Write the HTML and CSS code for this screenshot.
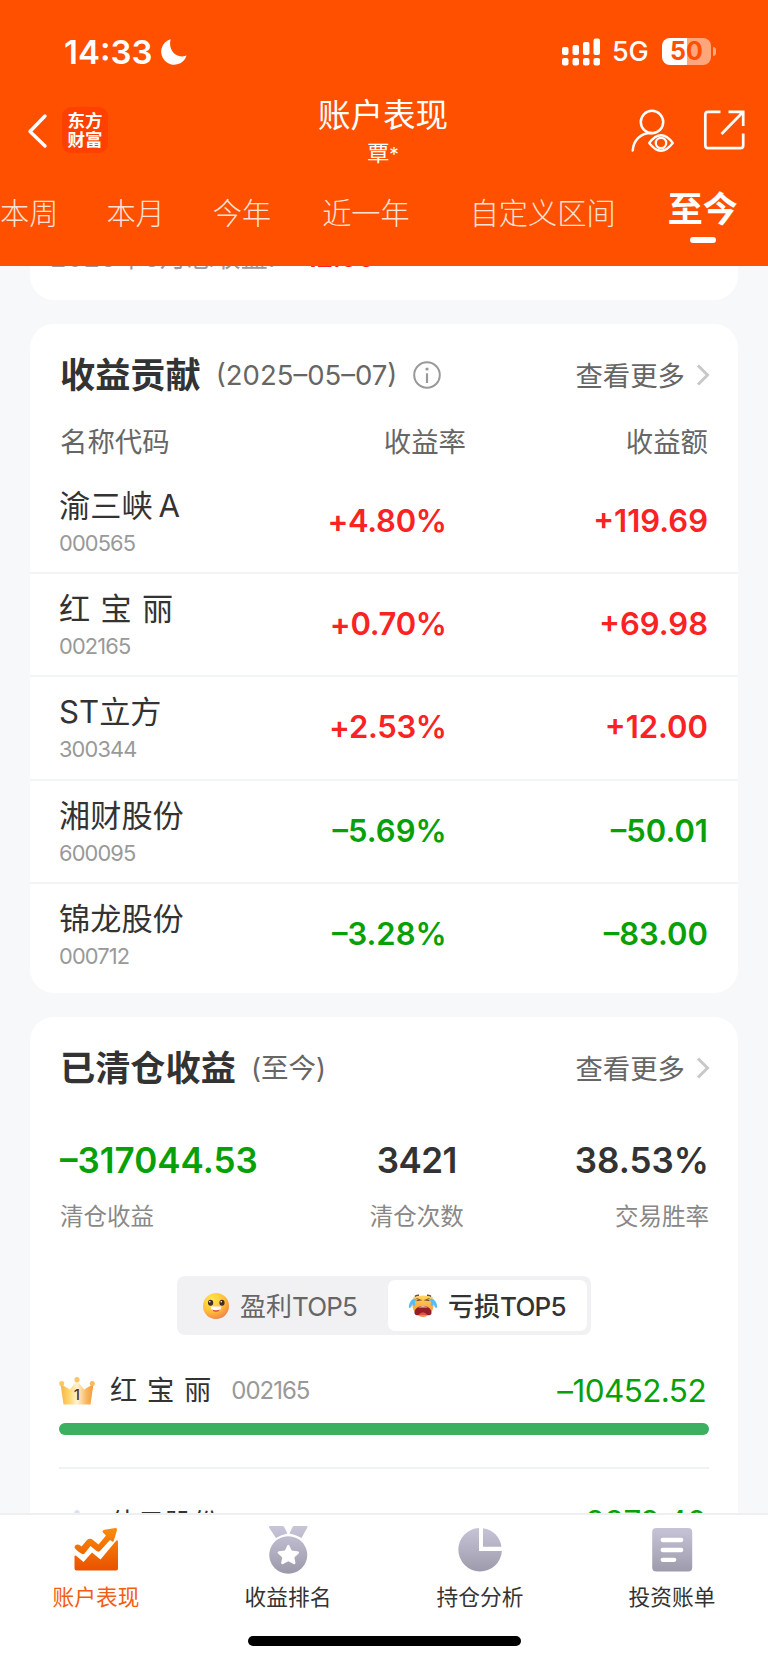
FILE: index.html
```html
<!DOCTYPE html>
<html lang="zh-CN">
<head>
<meta charset="utf-8">
<title>账户表现</title>
<link rel="stylesheet" href="styles.css">
</head>
<body>
<div class="app">
  <header class="header">
    <div class="status">
      <span class="time">14:33</span>
      <svg class="moon" width="28" height="28" viewBox="0 0 28 28"><path d="M10.6 1.2A13 13 0 1 0 26.6 17.6C17.500 21 7.600 13 10.600 1.200Z" fill="#fff"/></svg>
      <svg class="signal" width="39" height="28" viewBox="0 0 39 28" fill="#fff"><rect y="9" width="6.500" height="8" rx="2"/><rect x="10.500" y="7" width="6.500" height="10" rx="2"/><rect x="21" y="4" width="6.500" height="13" rx="2"/><rect x="31.500" y="0.500" width="6.500" height="16.500" rx="2"/><rect y="20" width="6.500" height="7.500" rx="2"/><rect x="10.500" y="20" width="6.500" height="7.500" rx="2"/><rect x="21" y="20" width="6.500" height="7.500" rx="2"/><rect x="31.500" y="20" width="6.500" height="7.500" rx="2"/></svg>
      <span class="net">5G</span>
      <span class="battery"><b>5</b><b>0</b></span><i class="nub"></i>
    </div>
    <div class="nav">
      <svg class="back" width="22" height="36" viewBox="0 0 22 36"><path d="M18 3 3 18.500l15 14.500" fill="none" stroke="#fff" stroke-width="3.400" stroke-linecap="round" stroke-linejoin="round"/></svg>
      <div class="logo">东方<br>财富</div>
      <div class="heading"><h1>账户表现</h1><p>覃<span>*</span></p></div>
      <svg class="person" width="44" height="44" viewBox="0 0 44 44" fill="none" stroke="#fff" stroke-width="2.500" stroke-linecap="round"><circle cx="21" cy="13" r="11.200"/><path d="M1.700 41.500C2.500 31 10 23.500 21 24"/><path d="M18.200 34Q30 18.500 41.800 34 30 49.500 18.200 34Z" fill="#ff5000" stroke-width="2.300" stroke-linejoin="round"/><circle cx="30" cy="34" r="5.200" stroke-width="2.300"/></svg>
      <svg class="share" width="42" height="42" viewBox="0 0 42 42" fill="none" stroke="#fff" stroke-width="2.700"><path d="M17.500 2.800H5Q2.300 2.800 2.300 5.500V36.500Q2.300 39.200 5 39.200H37.500Q40.200 39.200 40.200 36.500V24.500M25.500 2.800H40.200V17M39.500 3.500 18.500 25"/></svg>
    </div>
    <nav class="periods">
      <span>本周</span><span>本月</span><span>今年</span><span>近一年</span><span>自定义区间</span><strong>至今</strong>
    </nav>
  </header>

  <main class="content">
    <section class="card summary"><span>2025年5月总收益:</span><em>+12.00</em></section>

    <section class="card gains">
      <div class="card-head">
        <h2>收益贡献</h2><span class="sub">(2025–05–07)</span>
        <svg class="info" width="28" height="28" viewBox="0 0 28 28" fill="none" stroke="#999"><circle cx="14" cy="14" r="12.800" stroke-width="2"/><path d="M14 12.300V22" stroke-width="2.200"/><circle cx="14" cy="8" r="1.600" fill="#999" stroke="none"/></svg>
        <a class="more"><span>查看更多</span><svg width="14" height="22" viewBox="0 0 14 22"><path d="M2 1.500 11.500 11 2 20.500" fill="none" stroke="#c8c8c8" stroke-width="3"/></svg></a>
      </div>
      <div class="cols"><span>名称代码</span><span>收益率</span><span>收益额</span></div>
      <div class="stock up"><div class="name">渝三峡<span class="latin">A</span><small>000565</small></div><b>+4.80%</b><b>+119.69</b></div>
      <div class="stock up"><div class="name">红 宝 丽<small>002165</small></div><b>+0.70%</b><b>+69.98</b></div>
      <div class="stock up"><div class="name">ST立方<small>300344</small></div><b>+2.53%</b><b>+12.00</b></div>
      <div class="stock down"><div class="name">湘财股份<small>600095</small></div><b>–5.69%</b><b>–50.01</b></div>
      <div class="stock down"><div class="name">锦龙股份<small>000712</small></div><b>–3.28%</b><b>–83.00</b></div>
    </section>

    <section class="card closed">
      <div class="card-head">
        <h2>已清仓收益</h2><span class="sub">(至今)</span>
        <a class="more"><span>查看更多</span><svg width="14" height="22" viewBox="0 0 14 22"><path d="M2 1.500 11.500 11 2 20.500" fill="none" stroke="#c8c8c8" stroke-width="3"/></svg></a>
      </div>
      <div class="stats">
        <div><b class="green">–317044.53</b><span>清仓收益</span></div>
        <div><b>3421</b><span>清仓次数</span></div>
        <div><b>38.53%</b><span>交易胜率</span></div>
      </div>
      <div class="segment">
        <div class="seg">
          <svg width="26" height="26" viewBox="0 0 26 26"><defs><radialGradient id="smile" cx=".35" cy=".25" r=".85"><stop offset="0" stop-color="#ffe74c"/><stop offset=".55" stop-color="#ffc035"/><stop offset="1" stop-color="#ee7650"/></radialGradient></defs><circle cx="13" cy="13" r="13" fill="url(#smile)"/><ellipse cx="7.600" cy="9.800" rx="2.600" ry="3" fill="#432b2b"/><ellipse cx="19" cy="9.800" rx="2.600" ry="3" fill="#432b2b"/><circle cx="6.800" cy="8.800" r=".8" fill="#fff"/><circle cx="18.200" cy="8.800" r=".8" fill="#fff"/><path d="M7.500 13.500H18.500Q17.500 18.500 13 18.500T7.500 13.500Z" fill="#fff"/><path d="M9 16.500Q13 18 17.200 16.500 15.800 19 13 19T9 16.500Z" fill="#e45545"/></svg>
          <span>盈利<i>TOP5</i></span>
        </div>
        <div class="seg active">
          <svg width="30" height="26" viewBox="0 0 30 26"><defs><linearGradient id="cry" x2="0" y2="1"><stop stop-color="#ffd75a"/><stop offset="1" stop-color="#f28a38"/></linearGradient></defs><path d="M5.500 4Q15 1 24.500 4 27 11 24.500 17 21 24 15 24T5.500 17Q3 11 5.500 4Z" fill="url(#cry)"/><path d="M7 3.500Q8 2 11 2.300M23 3.500Q22 2 19 2.300" fill="none" stroke="#6f4b35" stroke-width="1.400"/><path d="m8.500 5.500 4 1.500-4 .8M21.500 5.500l-4 1.500 4 .8" fill="none" stroke="#895033" stroke-width="1.100"/><path d="M6.500 20.500C5.500 10.500 24.500 10.500 23.500 20.500Q22.500 23 20 22H10Q7.500 23 6.500 20.500Z" fill="#981d27"/><path d="M10 14.500Q15 11.500 20 14.500Z" fill="#f0c8ae"/><path d="M10.500 22Q15 16.500 19.500 22Z" fill="#df5246"/><path d="M8.500 6Q4 5 2.500 8.500C0 13 .8 15 2 15Q3.800 14 4.200 11 5 13.500 6.500 13 7.500 12 7 9ZM21.500 6Q26 5 27.500 8.500C30 13 29.200 15 28 15Q26.200 14 25.800 11 25 13.500 23.500 13 22.500 12 23 9Z" fill="#57bdf4"/></svg>
          <span>亏损<i>TOP5</i></span>
        </div>
      </div>
      <div class="rank">
        <div class="rank-line">
          <svg class="crown" width="36" height="28" viewBox="0 0 36 28"><defs><linearGradient id="gold"><stop stop-color="#f8b14d"/><stop offset=".25" stop-color="#ffd467"/><stop offset=".5" stop-color="#fff3d4"/><stop offset=".8" stop-color="#f8b45a"/><stop offset="1" stop-color="#f29a3f"/></linearGradient></defs><path d="M1.500 7 11 12.500 18 3.500 25 12.500 34.500 7 31.500 27.500H4.500Z" fill="url(#gold)"/><circle cx="2.700" cy="6.500" r="2.500" fill="#fac760"/><circle cx="18" cy="2.700" r="2.600" fill="#f8c46d"/><circle cx="33.300" cy="6.500" r="2.500" fill="#f9b85c"/><text x="17.800" y="23" text-anchor="middle" class="crown-no">1</text></svg>
          <span class="rname">红 宝 丽</span><span class="rcode">002165</span><span class="ramt">–10452.52</span>
        </div>
        <div class="bar"></div>
      </div>
      <div class="rank second">
        <div class="rank-line">
          <svg class="crown" width="36" height="28" viewBox="0 0 36 28"><path d="M1.500 7 11 12.500 18 3.500 25 12.500 34.500 7 31.500 27.500H4.500Z" fill="#dcdff4"/><circle cx="18" cy="2.700" r="2.600" fill="#dadef8"/><circle cx="2.700" cy="6.500" r="2.500" fill="#dadef8"/><circle cx="33.300" cy="6.500" r="2.500" fill="#dadef8"/></svg>
          <span class="rname">佳云股份</span><span class="ramt">–9879.40</span>
        </div>
      </div>
    </section>
  </main>

  <footer class="tabbar">
    <svg width="0" height="0" class="defs"><defs><linearGradient id="gray" gradientUnits="userSpaceOnUse" x1="0" y1="0" x2="0" y2="48"><stop stop-color="#c9c7da"/><stop offset="1" stop-color="#9d9bab"/></linearGradient><linearGradient id="org" gradientUnits="userSpaceOnUse" x1="0" y1="0" x2="0" y2="46"><stop stop-color="#fb920b"/><stop offset="1" stop-color="#e95200"/></linearGradient></defs></svg>
    <div class="tabs">
      <div class="tab on"><svg width="48" height="50" viewBox="0 0 48 50" fill="url(#org)"><path d="M2.500 32Q3.500 31 5 32.500L11.500 38 20 28.500 28.500 35.500 43.500 17.500Q46 15 46 18V44.500Q46 46.500 44 46.500H4.500Q2.500 46.500 2.500 44.500Z"/><path d="M2.500 23C3 20.500 6 19.500 8.300 21.500L9.500 22.500 15 16Q18 13.500 21 16L26.500 20.500 34 11.500 31 8.500Q29.500 6.500 32.500 5.700L43.500 4Q45.500 4 45 6L42 16Q41.500 19 39.500 17L38 16 28 27Q26 28.500 24 26.500L18.500 22 12.500 29.500Q10.500 31 8.500 29Q2.500 25 2.500 23Z"/></svg><span>账户表现</span></div>
      <div class="tab"><svg width="48" height="50" viewBox="0 0 48 50" fill="url(#gray)"><path d="M6 2H18.500Q20 2 20.500 3.500L23.500 9.500Q17 10.500 12 14L5 3.500Q4.500 2 6 2ZM30 2H42.500Q44 2 43.300 3.500L37.500 14Q32 10.500 25.500 9.500L28.500 3Q29 2 30 2Z"/><path fill-rule="evenodd" d="M24.300 12.300A19 18.700 0 1 1 24.200 12.300ZM24.300 20.800Q23.600 20.800 23.200 21.700L20.900 26.400 15.100 27.200Q12.500 27.900 14.300 29.800L18.200 33.500 17.200 38.500Q17.100 40.800 19.100 39.900L24.300 37.300 29.500 39.900Q31.500 40.800 31.400 38.500L30.400 33.500 34.300 29.800Q36.100 27.900 33.500 27.200L27.700 26.400 25.400 21.700Q25 20.800 24.300 20.800Z"/></svg><span>收益排名</span></div>
      <div class="tab"><svg width="48" height="50" viewBox="0 0 48 50" fill="url(#gray)"><path d="M23 3.900A21.800 21.800 0 1 0 45.900 27H23Z"/><path d="M27 4.200A21.300 21.300 0 0 1 45.400 22.800H27Z"/></svg><span>持仓分析</span></div>
      <div class="tab"><svg width="48" height="50" viewBox="0 0 48 50"><rect x="4.200" y="4" width="40" height="43.500" rx="4" fill="url(#gray)"/><path d="M14.700 16H33.200M14.700 26H33.200M14.700 35.800H26.200" stroke="#fff" stroke-width="4.300" stroke-linecap="round"/></svg><span>投资账单</span></div>
    </div>
    <div class="home"></div>
  </footer>
</div>
</body>
</html>
```
FILE: styles.css
```css
* { box-sizing: border-box; margin: 0; padding: 0; }
body { width: 768px; font-family: Inter, "Noto Sans CJK SC", sans-serif; color: #333; background: #f7f8fa; }
svg { flex: none; display: block; }
.app { height: 1663px; display: flex; flex-direction: column; overflow: hidden; }

.header { height: 266px; flex: none; background: #ff5000; color: #fff; overflow: hidden; }
.status { height: 90px; display: flex; align-items: center; padding: 13px 52px 0 64px; }
.time { width: 96px; font-size: 33px; font-weight: 600; line-height: 40px; white-space: nowrap; }
.signal { margin-left: 374px; }
.net { width: 50px; margin-left: 11px; font-size: 27px; font-weight: 500; line-height: 40px; letter-spacing: -.3px; }
.battery { width: 49px; height: 27px; border-radius: 8px; background: linear-gradient(90deg, #fff 25px, #ffa67d 25px); color: #ff5000; display: flex; justify-content: center; font-size: 25px; line-height: 27px; }
.battery b { font-weight: 700; }
.nub { width: 3px; height: 9px; margin-left: 2px; border-radius: 0 4px 4px 0; background: #ffa67d; }

.nav { height: 90px; display: flex; align-items: flex-start; padding: 17px 23px 0 27px; }
.back { margin-top: 6px; }
.logo { width: 46px; height: 46px; margin-left: 13px; padding-top: 5px; border-radius: 9px; background: #ff4000; font-size: 17.500px; font-weight: 700; line-height: 18.500px; text-align: center; }
.heading { flex: 1; margin-left: 27px; text-align: center; }
.heading h1 { height: 36px; margin-top: -9px; font-size: 32.500px; font-weight: 400; line-height: 36px; }
.heading p { margin-top: 5px; font-size: 22px; line-height: 28px; }
.heading p span { font-size: 19px; }
.person { margin: 2px 0 0; }
.share { margin: 2px 0 0 28px; }

.periods { height: 86px; display: flex; align-items: flex-start; white-space: nowrap; font-size: 29.200px; font-weight: 300; line-height: 40px; color: #ffe2d6; padding-top: 14px; }
.periods span:nth-child(2) { margin-left: 48px; }
.periods span:nth-child(3) { margin-left: 48px; }
.periods span:nth-child(4) { margin-left: 51px; }
.periods span:nth-child(5) { margin-left: 60px; }
.periods strong { margin: -5px 0 0 52px; font-size: 35px; font-weight: 700; color: #fff; display: flex; flex-direction: column; align-items: center; }
.periods strong::after { content: ""; width: 26px; height: 6px; margin-top: 8px; border-radius: 3px; background: #fff; }

.content { flex: 1; min-height: 0; overflow: hidden; padding: 0 30px; display: flex; flex-direction: column; gap: 24px; }
.card { flex: none; background: #fff; border-radius: 24px; }
.summary { height: 134px; margin-top: -100px; padding: 72px 20px 0; font-size: 27px; line-height: 40px; color: #999; display: flex; gap: 12px; }
.summary em { font-style: normal; font-weight: 600; letter-spacing: -.500px; color: #fa2222; }
.gains { height: 669px; }
.card-head { height: 102px; display: flex; align-items: center; padding: 0 28px 0 30px; }
.card-head h2 { font-size: 35.200px; font-weight: 700; line-height: 44px; }
.sub { margin-left: 15px; font-size: 27.500px; line-height: 40px; color: #666; }
.info { margin-left: 16px; }
.more { margin-left: auto; display: flex; align-items: center; gap: 11px; font-size: 27.400px; line-height: 40px; color: #666; }
.more span { padding-top: 1px; }
.cols { height: 44.500px; display: grid; grid-template-columns: 1fr 1fr 1fr; padding: 1px 30px 0; font-size: 27.400px; line-height: 30px; color: #666; }
.cols span:nth-child(2) { justify-self: end; margin-right: 26px; }
.cols span:nth-child(3) { justify-self: end; }
.stock { height: 103.400px; display: grid; grid-template-columns: 1fr 1fr 1fr; padding: 0 30px 0 29px; border-bottom: 2px solid #f3f4f6; }
.stock:last-child { border: 0; }
.name { padding-top: 15px; font-size: 31.200px; line-height: 40px; white-space: nowrap; word-spacing: 1.500px; }
.name .latin { margin-left: 6px; }
.name small { display: block; margin-top: 2px; font-size: 21.800px; line-height: 30px; letter-spacing: -.850px; color: #999; }
.stock b { justify-self: end; margin-top: 30px; font-size: 31px; font-weight: 600; line-height: 40px; }
.stock b:nth-child(2) { margin-right: 45px; }
.up b:nth-child(2) { letter-spacing: -.300px; }
.up b { color: #fa2222; }
.down b, .green { color: #07a007; }

.closed { height: 660px; }
.stats { height: 157px; padding: 20px 29px 0 30px; display: flex; justify-content: space-between; }
.stats div { display: flex; flex-direction: column; }
.stats div:nth-child(2) { align-items: center; margin-left: 1px; }
.stats div:last-child { align-items: flex-end; }
.stats b { font-size: 35px; font-weight: 600; line-height: 42px; }
.stats div:nth-child(2) b { letter-spacing: -.500px; }
.stats span { margin-top: 21px; font-size: 23.500px; line-height: 30px; color: #888; }
.segment { width: 414px; height: 59px; margin: 0 0 0 147px; padding: 4px; border-radius: 8px; background: #f1f1f4; display: flex; }
.seg { width: 207px; display: flex; align-items: center; padding-left: 22px; gap: 11px; font-size: 26px; color: #666; white-space: nowrap; }
.seg span { margin-top: -2px; }
.seg i { font-style: normal; letter-spacing: -.800px; }
.seg.active { width: 199px; padding-left: 20px; gap: 10px; border-radius: 7px; background: #fff; color: #333; font-weight: 500; }
.rank { height: 133.500px; margin: 0 29px; border-bottom: 2px solid #f1f2f4; padding-top: 36px; }
.rank.second { padding-top: 35px; }
.rank-line { height: 40px; display: flex; align-items: center; line-height: 40px; }
.rank.second .ramt { margin-top: -3px; }
.crown-no { font-size: 15px; font-weight: 500; fill: #5a2f25; }
.rname { margin-left: 15px; font-size: 27.300px; word-spacing: 2px; }
.rcode { margin-left: 20px; font-size: 24px; letter-spacing: -1px; color: #999; }
.ramt { margin-left: auto; padding-right: 3px; font-size: 31.500px; letter-spacing: -.600px; color: #07a007; }
.bar { height: 12px; margin-top: 12px; border-radius: 6px; background: #3caf61; }

.tabbar { height: 150px; flex: none; background: #fff; border-top: 2px solid #eeeff1; }
.defs { position: absolute; }
.tabs { height: 121px; display: flex; }
.tab { flex: 1; padding-top: 9px; display: flex; flex-direction: column; align-items: center; font-size: 21.700px; line-height: 30px; }
.tab span { margin-top: 8px; }
.on { color: #f55c11; }
.home { width: 273px; height: 10px; margin-left: 248px; border-radius: 5px; background: #000; }
```
